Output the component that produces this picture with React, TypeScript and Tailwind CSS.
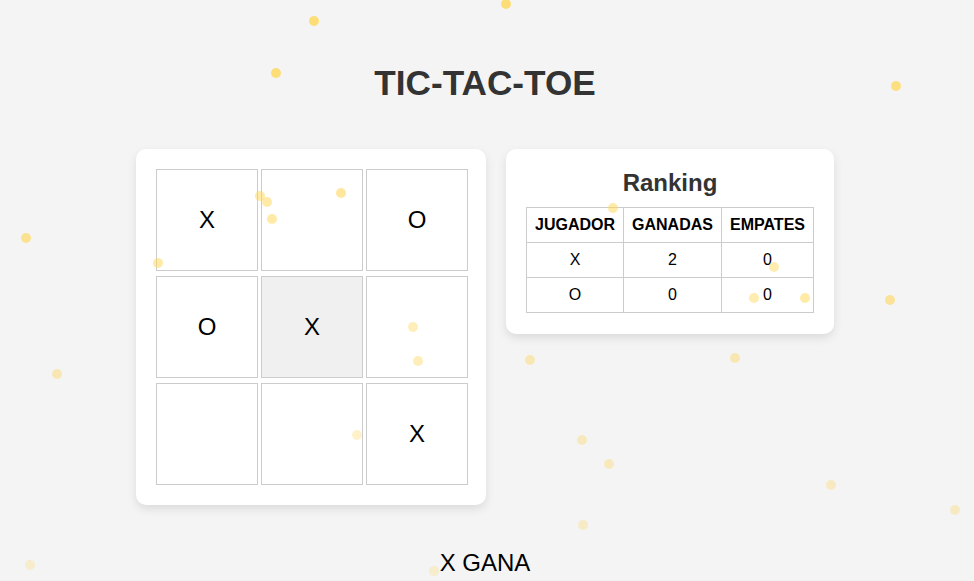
const board = ["X", "", "O", "O", "X", "", "", "", "X"];

const ranking = [
  { jugador: "X", ganadas: 2, empates: 0 },
  { jugador: "O", ganadas: 0, empates: 0 },
];

// confetti dots: x, y (center), opacity
const dots: [number, number, number][] = [
  [314, 21, 0.75], [506, 4, 0.75], [276, 73, 0.75], [896, 86, 0.7],
  [26, 238, 0.6], [158, 263, 0.5], [260, 196, 0.5], [267, 202, 0.5],
  [272, 219, 0.5], [341, 193, 0.55], [613, 208, 0.5], [774, 267, 0.45],
  [754, 298, 0.45], [805, 298, 0.5], [890, 300, 0.55], [413, 327, 0.4],
  [418, 361, 0.4], [530, 360, 0.4], [735, 358, 0.4], [57, 374, 0.4],
  [357, 435, 0.3], [582, 440, 0.33], [609, 464, 0.33], [831, 485, 0.3],
  [955, 510, 0.3], [583, 525, 0.28], [30, 565, 0.25], [434, 571, 0.25],
];

export default function App() {
  return (
    <div
      className="relative min-h-[581px] bg-[#f4f4f4] overflow-hidden text-black pr-1"
      style={{ fontFamily: '"Liberation Sans", Arial, sans-serif' }}
    >
      <h1 className="pt-[63px] text-center text-[35.2px] leading-[40px] font-bold text-[#333]">
        TIC-TAC-TOE
      </h1>

      <div className="mt-[46px] flex justify-center items-start gap-5">
        {/* Board */}
        <div className="w-[350px] bg-white rounded-[10px] shadow-[0_4px_10px_rgba(0,0,0,0.1)] pt-5 pb-5 pl-5">
          <div className="grid grid-cols-[repeat(3,102px)] gap-x-[3px] gap-y-[5px]">
            {board.map((v, i) => (
              <div
                key={i}
                className={`h-[102px] border border-[#ccc] flex items-center justify-center text-[24px] ${
                  i === 4 ? "bg-[#f0f0f0]" : "bg-white"
                }`}
              >
                {v}
              </div>
            ))}
          </div>
        </div>

        {/* Ranking */}
        <div className="w-[328px] bg-white rounded-[10px] shadow-[0_4px_10px_rgba(0,0,0,0.1)] px-5 pt-5 pb-[21px]">
          <h2 className="text-center text-[24px] leading-[28px] font-bold text-[#333] mb-[10px]">
            Ranking
          </h2>
          <table className="w-full border-collapse text-[16px]">
            <thead>
              <tr>
                <th className="border border-[#ccc] px-2 py-2 font-bold leading-[18px] w-[97px]">JUGADOR</th>
                <th className="border border-[#ccc] px-2 py-2 font-bold leading-[18px] w-[98px]">GANADAS</th>
                <th className="border border-[#ccc] px-2 py-2 font-bold leading-[18px]">EMPATES</th>
              </tr>
            </thead>
            <tbody>
              {ranking.map((r) => (
                <tr key={r.jugador}>
                  <td className="border border-[#ccc] px-2 py-2 text-center leading-[18px]">{r.jugador}</td>
                  <td className="border border-[#ccc] px-2 py-2 text-center leading-[18px]">{r.ganadas}</td>
                  <td className="border border-[#ccc] px-2 py-2 text-center leading-[18px]">{r.empates}</td>
                </tr>
              ))}
            </tbody>
          </table>
        </div>
      </div>

      <p className="mt-[44px] text-center text-[24px] leading-[27px]">X GANA</p>

      {/* confetti */}
      {dots.map(([x, y, o], i) => (
        <span
          key={i}
          className="absolute w-[10px] h-[10px] rounded-full bg-[#ffd54f] pointer-events-none"
          style={{ left: x - 5, top: y - 5, opacity: o }}
        />
      ))}
    </div>
  );
}
